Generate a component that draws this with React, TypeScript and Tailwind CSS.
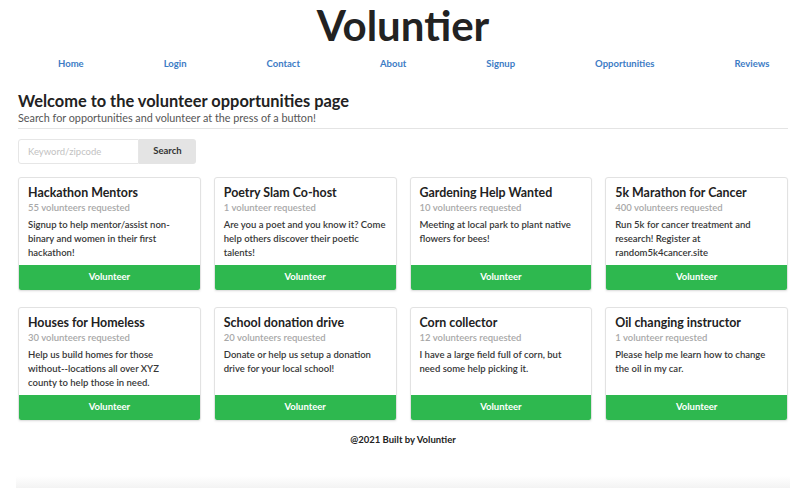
import type React from "react"

const navItems = ["Home", "Login", "Contact", "About", "Signup", "Opportunities", "Reviews"]

const opportunities: { title: string; count: string; body: React.ReactNode }[] = [
  {
    title: "Hackathon Mentors",
    count: "55 volunteers requested",
    body: "Signup to help mentor/assist non-binary and women in their first hackathon!",
  },
  {
    title: "Poetry Slam Co-host",
    count: "1 volunteer requested",
    body: "Are you a poet and you know it? Come help others discover their poetic talents!",
  },
  {
    title: "Gardening Help Wanted",
    count: "10 volunteers requested",
    body: "Meeting at local park to plant native flowers for bees!",
  },
  {
    title: "5k Marathon for Cancer",
    count: "400 volunteers requested",
    body: "Run 5k for cancer treatment and research! Register at random5k4cancer.site",
  },
  {
    title: "Houses for Homeless",
    count: "30 volunteers requested",
    // non-breaking hyphens keep "without--locations" on one line
    body: (
      <>
        Help us build homes for those without{"\u2011\u2011"}locations all over XYZ
        <br />
        county to help those in need.
      </>
    ),
  },
  {
    title: "School donation drive",
    count: "20 volunteers requested",
    body: "Donate or help us setup a donation drive for your local school!",
  },
  {
    title: "Corn collector",
    count: "12 volunteers requested",
    body: "I have a large field full of corn, but need some help picking it.",
  },
  {
    title: "Oil changing instructor",
    count: "1 volunteer requested",
    body: "Please help me learn how to change the oil in my car.",
  },
]

function OpportunityCard({ title, count, body }: { title: string; count: string; body: React.ReactNode }) {
  return (
    <div className="flex h-[114px] flex-col overflow-hidden rounded-[3px] border border-[#e2e2e2] bg-white shadow-[0_1px_2px_rgba(0,0,0,0.06)]">
      <div className="flex-1 pl-[9px] pr-[9px] pt-[7px]">
        <h3 className="text-[12.4px] font-bold leading-[16px] text-[#222]">{title}</h3>
        <p className="text-[9.5px] font-semibold leading-[14px] text-[#a8a8a8]">{count}</p>
        <p className="mt-[3px] text-[9.5px] font-semibold leading-[14px] text-[#363636]">{body}</p>
      </div>
      <button className="h-[25px] w-full bg-[#2eb84f] text-[9.5px] font-bold text-white">Volunteer</button>
    </div>
  )
}

export default function App() {
  return (
    <div className="relative min-h-[488px] bg-white font-['Lato','Noto_Sans',sans-serif]">
      <header className="flex flex-col items-center">
        <h1 className="pt-[4px] text-[42px] font-bold leading-[42px] text-[#222]">Voluntier</h1>
        <nav className="mt-[11px] flex w-full gap-[80px] pl-[58px]">
          {navItems.map((item) => (
            <a key={item} href="#" className="text-[9.5px] font-bold leading-[14px] text-[#3d7cc5]">
              {item}
            </a>
          ))}
        </nav>
      </header>

      <main className="px-[18px]">
        <div className="mt-[20px] border-b border-[#e4e4e4] pb-[3px]">
          <h2 className="text-[16.4px] font-bold leading-[20px] text-[#222]">
            Welcome to the volunteer opportunities page
          </h2>
          <p className="text-[10.8px] leading-[14px] text-[#555]">
            Search for opportunities and volunteer at the press of a button!
          </p>
        </div>

        <div className="mt-[10px] flex">
          <input
            placeholder="Keyword/zipcode"
            className="h-[25px] w-[121px] rounded-l-[3px] border border-[#e6e6e6] px-[9px] text-[9.5px] text-[#333] placeholder:text-[#c2c2c2] outline-none"
          />
          <button className="h-[25px] w-[57px] rounded-r-[3px] bg-[#e4e4e4] text-[9.5px] font-bold text-[#333]">
            Search
          </button>
        </div>

        <div className="mt-[13px] grid grid-cols-4 gap-x-[13px] gap-y-[16px]">
          {opportunities.map((o) => (
            <OpportunityCard key={o.title} {...o} />
          ))}
        </div>

        <footer className="mt-[12px] text-center text-[9.5px] font-bold leading-[14px] text-[#222]">
          @2021 Built by Voluntier
        </footer>
      </main>

      <div className="absolute bottom-0 left-[16px] right-[16px] h-[12px] bg-gradient-to-b from-white to-[#f3f3f3]" />
    </div>
  )
}
